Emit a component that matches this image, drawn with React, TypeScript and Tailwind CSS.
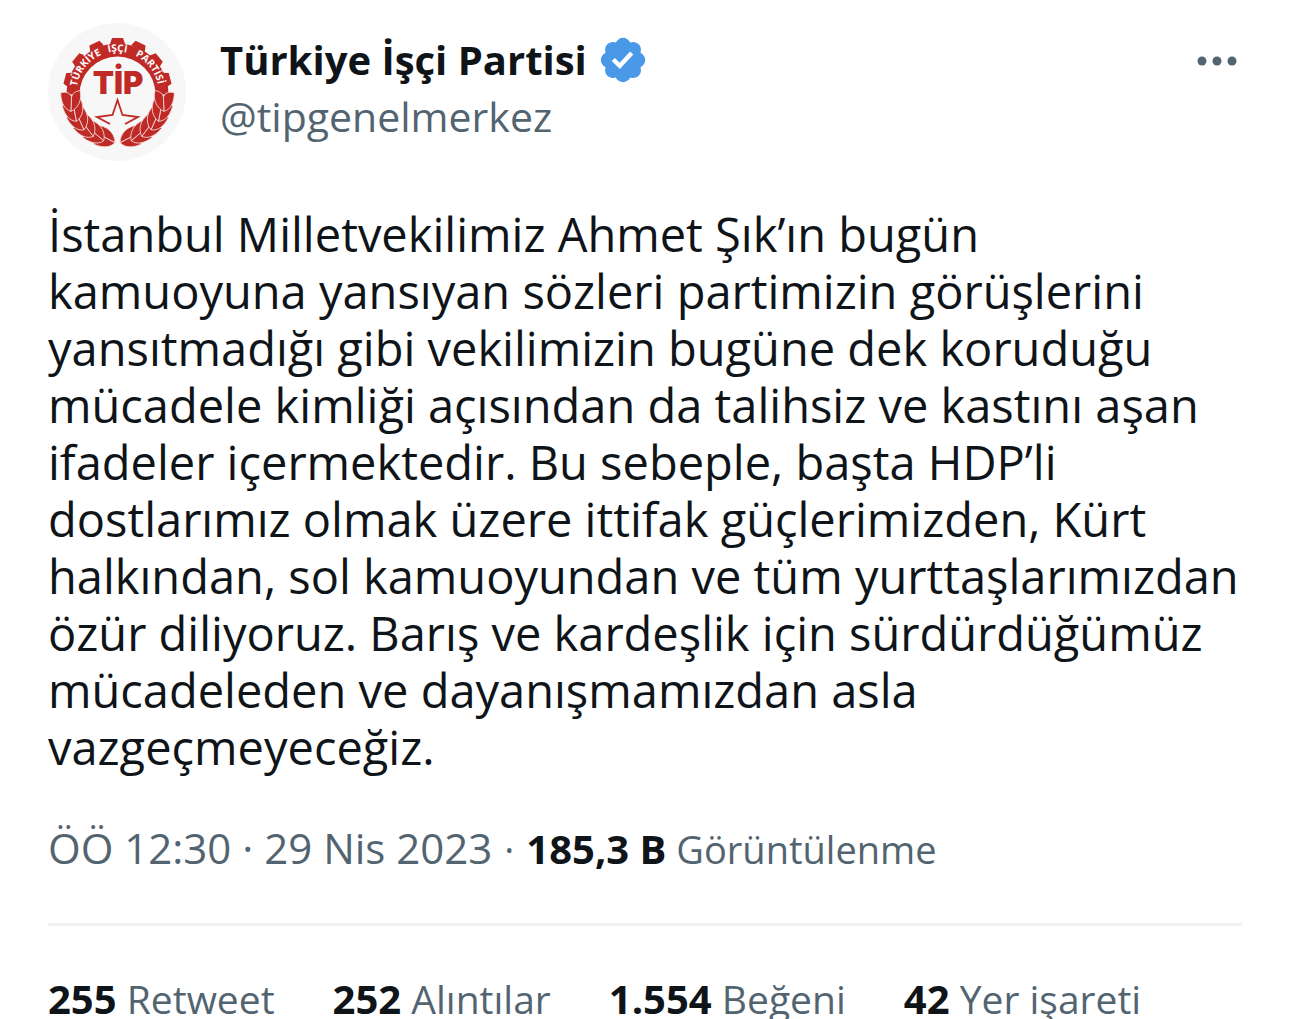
import type { ReactNode } from "react";

const lines = [
  "İstanbul Milletvekilimiz Ahmet Şık’ın bugün",
  "kamuoyuna yansıyan sözleri partimizin görüşlerini",
  "yansıtmadığı gibi vekilimizin bugüne dek koruduğu",
  "mücadele kimliği açısından da talihsiz ve kastını aşan",
  "ifadeler içermektedir. Bu sebeple, başta HDP’li",
  "dostlarımız olmak üzere ittifak güçlerimizden, Kürt",
  "halkından, sol kamuoyundan ve tüm yurttaşlarımızdan",
  "özür diliyoruz. Barış ve kardeşlik için sürdürdüğümüz",
  "mücadeleden ve dayanışmamızdan asla",
  "vazgeçmeyeceğiz.",
];

const stats = [
  { count: "255", label: "Retweet" },
  { count: "252", label: "Alıntılar" },
  { count: "1.554", label: "Beğeni" },
  { count: "42", label: "Yer işareti" },
];

const teeth = [-75, -50, -25, 0, 25, 50, 75];
const leaves = [165, 152, 139, 126, 113, 100];

const arcWords = [
  { word: "TÜRKİYE", offset: "21%" },
  { word: "İŞÇİ", offset: "50%" },
  { word: "PARTİSİ", offset: "79%" },
];

function Laurel() {
  return (
    <g stroke="#f3dcda" strokeWidth="0.8">
      {leaves.map((a) => (
        <g key={a} transform={`rotate(${a} 69.5 69.5)`}>
          <path d="M80 20.5C77 14 69 12 60 13.5C59 19 62 23 66 23.5Z" />
          <path d="M80 20.5C78 28 71 33.5 61 33C61 28 63 24.5 66 23.5Z" />
        </g>
      ))}
    </g>
  );
}

function PartyLogo() {
  return (
    <svg viewBox="0 0 138 138" className="size-full" role="img" aria-label="Türkiye İşçi Partisi">
      <g fill="#bf2a26">
        {teeth.map((a) => (
          <path
            key={a}
            d="M62 21L64 15H75L77 21Z"
            transform={`rotate(${a} 69.5 69.5)`}
          />
        ))}
        <path d="M18.5 71.5A51 51 0 0 1 120.5 71.5H107.5A38 38 0 0 0 31.5 71.5Z" />
        <Laurel />
        <g transform="translate(139 0) scale(-1 1)">
          <Laurel />
        </g>
        <text
          x="70"
          y="71"
          textAnchor="middle"
          fontSize="31"
          fontWeight="900"
          fontFamily="Inter, sans-serif"
        >
          TİP
        </text>
      </g>
      <path
        d="M62 101L49 94L64.5 92L69.5 77L74.5 92L90 94L77 101"
        fill="none"
        stroke="#bf2a26"
        strokeWidth="1.8"
      />
      <path id="arc" d="M28.5 69.5A41 41 0 0 1 110.5 69.5" fill="none" />
      <g
        fill="#fff"
        fontSize="10"
        fontWeight="700"
        fontFamily="Open Sans, sans-serif"
        textAnchor="middle"
      >
        {arcWords.map(({ word, offset }) => (
          <text key={word}>
            <textPath href="#arc" startOffset={offset}>
              {word}
            </textPath>
          </text>
        ))}
      </g>
    </svg>
  );
}

function VerifiedBadge() {
  return (
    <svg viewBox="0 0 22 22" className="size-[52px]" fill="#4a99e9" role="img" aria-label="Onaylı hesap">
      <path d="M20.396 11c-.018-.646-.215-1.275-.57-1.816-.354-.54-.852-.972-1.438-1.246.223-.607.27-1.264.14-1.897-.131-.634-.437-1.218-.882-1.687-.47-.445-1.053-.75-1.687-.882-.633-.13-1.290-.083-1.897.14-.273-.587-.704-1.086-1.245-1.440S11.647 1.620 11 1.604c-.646.017-1.273.213-1.813.568s-.969.854-1.240 1.440c-.608-.223-1.267-.272-1.902-.14-.635.130-1.220.436-1.690.882-.445.470-.749 1.055-.878 1.688-.130.633-.080 1.290.144 1.896-.587.274-1.087.705-1.443 1.245-.356.540-.555 1.170-.574 1.817.020.647.218 1.276.574 1.817.356.540.856.972 1.443 1.245-.224.606-.274 1.263-.144 1.896.130.634.433 1.218.877 1.688.470.443 1.054.747 1.687.878.633.132 1.290.084 1.897-.136.274.586.705 1.084 1.246 1.439.540.354 1.170.551 1.816.569.647-.016 1.276-.213 1.817-.567s.972-.854 1.245-1.440c.604.239 1.266.296 1.903.164.636-.132 1.220-.447 1.680-.907.460-.460.776-1.044.908-1.681s.075-1.299-.165-1.903c.586-.274 1.084-.705 1.439-1.246.354-.540.551-1.170.569-1.816zM9.662 14.850l-3.429-3.428 1.293-1.302 2.072 2.072 4.400-4.794 1.347 1.246z" />
    </svg>
  );
}

function Bold({ children }: { children: ReactNode }) {
  return <span className="text-[40px] font-bold text-[#0f1419]">{children}</span>;
}

export default function App() {
  return (
    <main className="min-h-screen bg-white px-12 pt-[23px] font-['Open_Sans',sans-serif] text-[#536471]">
      <article>
        <header className="flex items-start">
          <a href="#profile" className="size-[138px] shrink-0 overflow-hidden rounded-full bg-[#f7f7f7]">
            <PartyLogo />
          </a>
          <div className="ml-[34px] flex-1 pt-2">
            <div className="flex h-[58px] items-center gap-[10px]">
              <a href="#profile" className="text-[40px] leading-[58px] font-bold whitespace-nowrap text-[#0f1419]">
                Türkiye İşçi Partisi
              </a>
              <VerifiedBadge />
            </div>
            <a href="#profile" className="block text-[41px] leading-[54px]">
              @tipgenelmerkez
            </a>
          </div>
          <button type="button" aria-label="Daha fazla" className="mt-[14px] h-12">
            <svg viewBox="0 0 50 48" className="h-12 w-[50px]" fill="#536471">
              <circle cx="10" cy="24" r="4.5" />
              <circle cx="25" cy="24" r="4.5" />
              <circle cx="40" cy="24" r="4.5" />
            </svg>
          </button>
        </header>

        <p className="mt-[45px] text-[47px] leading-[57px] whitespace-nowrap text-[#0f1419]">
          {lines.map((line) => (
            <span key={line} className="block">
              {line}
            </span>
          ))}
        </p>

        <div className="mt-[43px] flex h-[58px] items-baseline text-[38px] leading-[58px] whitespace-nowrap">
          <time dateTime="2023-04-29T00:30" className="text-[42px]">
            ÖÖ 12:30 · 29 Nis 2023
          </time>
          <span className="mx-3">·</span>
          <a href="#views">
            <Bold>185,3 B</Bold> Görüntülenme
          </a>
        </div>

        <hr className="mt-[46px] border-t-[3px] border-[#eff1f2]" />

        <div className="mt-[45px] flex gap-[58px] text-[39px] leading-[56px] whitespace-nowrap">
          {stats.map((stat) => (
            <a key={stat.label} href="#stats">
              <Bold>{stat.count}</Bold> {stat.label}
            </a>
          ))}
        </div>
      </article>
    </main>
  );
}
